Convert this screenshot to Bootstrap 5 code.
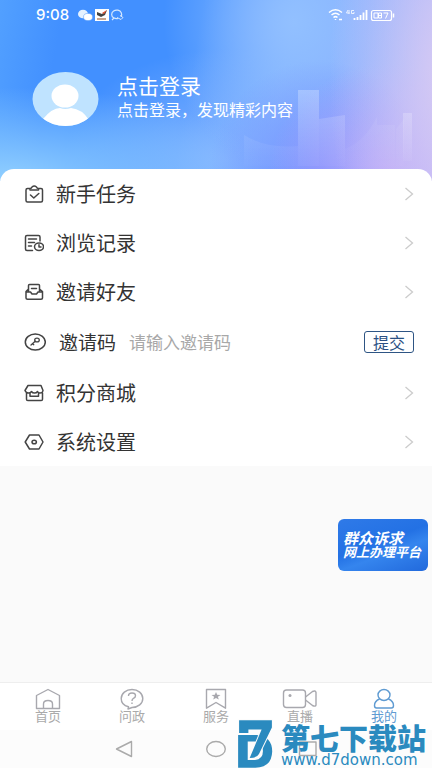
<!DOCTYPE html>
<html lang="zh-CN">
<head>
<meta charset="utf-8">
<meta name="viewport" content="width=device-width, initial-scale=1">
<title>我的</title>
<link href="https://cdn.jsdelivr.net/npm/bootstrap@5.3.0/dist/css/bootstrap.min.css" rel="stylesheet">
<style>
body { font-family: "Noto Sans CJK SC", sans-serif; background: #fafafa; color: #333; }
svg { display: block; flex: none; }
.hero {
  height: 181px; margin-bottom: -12px; color: #fff;
  background:
    radial-gradient(ellipse 120px 260px at 104% 42%, #d8caf3 0, #d3c8f600 100%),
    radial-gradient(ellipse 120px 110px at 90% 96%, #b9a6f9 0, #b9a6f900 100%),
    radial-gradient(ellipse 110px 110px at 74% 94%, #7590ff 0, #7591ff00 100%),
    radial-gradient(ellipse 130px 150px at 68% 12%, #92c0ff 0, #8dbcff00 100%),
    radial-gradient(ellipse 260px 90px at 2% 98%, #8fceff 0, #92d0ff00 100%),
    radial-gradient(ellipse 160px 110px at 52% 88%, #84b4ff 0, #86b4ff00 100%),
    linear-gradient(100deg, #52a0ff 0, #4290ff 14%, #4290ff 44%, #7caeff 64%, #8aacff 80%, #b0bcfc 100%);
}
.skyline { right: 0; bottom: 0; }
.status { padding: 5px 36px 0 36px; height: 24px; }
.clock { font: 500 15px/20px Inter, sans-serif; margin-right: 9px; }
.profile { padding: 48px 32px 0; gap: 18px; }
.login-text { padding-bottom: 4px; }
.login-name { font-size: 21px; line-height: 24px; }
.login-tip { font-size: 16px; line-height: 24px; }
.menu-card { border-radius: 14px 14px 0 0; background: #fff; }
.menu-row { height: 49px; padding: 0 18px 0 24px; gap: 12px; font-size: 20px; line-height: 24px; color: #333; }
.menu-row.code-row { height: 52px; gap: 13px; }
.code-row label { font-size: 19px; }
.code-row input { font-size: 17px; line-height: 24px; min-width: 0; color: #333; background: none; }
.code-row input::placeholder { color: #a8a8a8; opacity: 1; }
.btn-submit { font-size: 16px; line-height: 20px; padding: 0 8px; border: 1px solid #2e5584; border-radius: 3px; color: #2a5083; background: #fff; }
.ink { fill: none; stroke: #444; stroke-width: 1.5; stroke-linejoin: round; stroke-linecap: round; }
.chev { fill: none; stroke: #ccc; stroke-width: 1.3; }
.float-ad {
  right: 4px; top: 53px; width: 90px; height: 52px; border-radius: 6px; padding: 0 0 2px 5px;
  background: linear-gradient(160deg, #2f7ae8 0, #2371e4 45%, #3585ee 62%, #2169dc 100%);
  font-weight: 700; font-style: italic; color: #fff;
}
.ad-a { font-size: 15px; line-height: 14px; }
.ad-b { font-size: 13px; line-height: 13px; }
.tabs { height: 48px; padding: 5px 6px 0; background: #fff; border-top: 1px solid #eee; }
.tab { font-size: 13px; line-height: 12px; color: #aaa; }
.tab svg { fill: none; stroke: #a8a8ae; stroke-width: 1.4; stroke-linejoin: round; }
.tab.current { color: #5f9bd2; }
.tab.current svg { stroke: #5f9bd2; }
.sysbar { height: 38px; gap: 72px; background: #fcfcfc; }
.sysbar svg { fill: none; stroke: #aaa; stroke-width: 1.4; stroke-linejoin: round; }
.stamp { right: 6px; bottom: 0; gap: 8px; color: #2a8abf; pointer-events: none; }
.stamp-name { font-size: 29px; line-height: 29px; font-weight: 900; }
.stamp-url { font: 15px/16px "DejaVu Sans", sans-serif; }
</style>
<script src="https://cdn.jsdelivr.net/npm/bootstrap@5.3.0/dist/js/bootstrap.bundle.min.js"></script>
</head>
<body>
<div class="d-flex flex-column min-vh-100 position-relative overflow-hidden">
  <header class="hero position-relative">
    <svg class="skyline position-absolute" width="200" height="100" viewBox="0 0 200 100">
      <defs><linearGradient id="tower" x1="0" y1="0" x2="0" y2="1"><stop offset="0" stop-color="#fff" stop-opacity=".26"/><stop offset="1" stop-color="#fff" stop-opacity=".05"/></linearGradient></defs>
      <g fill="url(#tower)"><path d="M66 9h21v76H66z"/><path opacity=".6" d="M87 38l26-4v51H87z"/><path opacity=".3" d="M12 54q22 14 54 11v20H12z"/><path opacity=".25" d="M113 68q20-8 32-32v49h-32zM145 44h18v41h-18zM164 48l8-10v47h-8z"/><path opacity=".8" d="M171 32h9v48h-9z"/></g>
    </svg>
    <div class="status d-flex align-items-center position-relative">
      <span class="clock">9:08</span>
      <svg width="54" height="14" viewBox="-3 0 54 14" class="me-auto ms-n1">
        <ellipse cx="2" cy="6" rx="5" ry="4.3" fill="#e5f2ff"/><ellipse cx="7" cy="9" rx="4.5" ry="3.6" fill="#fff" stroke="#69a7fb" stroke-width=".6"/>
        <path fill="#fff" d="M14 1h14v12H14z"/><path d="M16 4l5 2 5-4-2 5-4 2-4-2z" fill="#444"/><path d="M21 5l5-3-3 4z" fill="#e65332"/><path d="M16 11h9" stroke="#b78768" stroke-width="1.500"/>
        <path d="M37 10.500a5 4.300 0 1 1 3-2M33 10l-2 2" fill="none" stroke="#d5e8ff" stroke-width="1.200"/><path d="M36 9.500l4 2 2-2-3-2" fill="none" stroke="#d5e8ff"/>
      </svg>
      <svg width="68" height="14" viewBox="0 0 68 14" fill="none" stroke="#fff" stroke-width="1.500">
        <path d="M1 4.500Q7.500-.8 14 4.500M3.500 7q4-3.500 8 0M5.500 9.500q2-1.800 4 0M7.500 11v1M11 11.500h3"/>
        <path d="M20 2l-1.500 3h3M21 2v4M26 2.500h-2.500v3H26V4" stroke-width=".8"/>
        <path d="M26.500 10v2M29.500 9v3M32.500 7v5M35.500 4.500V12M38.500 2v10" stroke-width="1.800"/>
        <rect x="43.500" y="2.500" width="20" height="10" rx="2" stroke-width="1.200"/><path d="M65.500 5.500v4"/><path d="M46 5h4v5h-4zM50.500 5h3v5h-3zM50.500 7.500h3M55.500 5h4.500l-2.500 5.500" stroke-width="1"/>
      </svg>
    </div>
    <a href="#" class="profile d-flex align-items-center text-white text-decoration-none position-relative">
      <svg width="67" height="54" viewBox="0 0 67 54"><defs><clipPath id="face"><ellipse cx="33.500" cy="27" rx="33" ry="27"/></clipPath></defs><g clip-path="url(#face)"><path fill="#bfe3ff" d="M0 0h67v54H0z"/><ellipse cx="33" cy="24" rx="13.500" ry="11.500" fill="#fff"/><path d="M11 54V47Q20 36 28 36Q33 38 39 36Q50 37 57 48V54Z" fill="#fff"/></g></svg>
      <span class="login-text"><span class="login-name d-block">点击登录</span><span class="login-tip d-block">点击登录，发现精彩内容</span></span>
    </a>
  </header>

  <main class="flex-grow-1 position-relative">
    <div class="menu-card">
      <a href="#" class="menu-row d-flex align-items-center text-decoration-none">
        <svg class="ink" width="20" height="18" viewBox="0 0 20 18"><path d="M6 3.500H3.500Q2 3.500 2 5V15.500Q2 17 3.500 17H17Q18.500 17 18.500 15.500V5Q18.500 3.500 17 3.500H14.500M6 5V3.500Q7.500 3.500 8 2Q10.200 0 12.500 2Q13 3.500 14.500 3.500V5ZM6.500 10l3.300 3 5-4.500"/></svg>
        <span class="me-auto">新手任务</span><svg class="chev" width="10" height="14" viewBox="0 0 10 14"><path d="M1.500 1l7 6-7 6"/></svg>
      </a>
      <a href="#" class="menu-row d-flex align-items-center text-decoration-none">
        <svg class="ink" width="20" height="18" viewBox="0 0 20 18"><path d="M8.500 16.500H3Q1.500 16.500 1.500 15V3Q1.500 1.500 3 1.500H14.500Q16 1.500 16 3V7M4.500 5h8M4.500 8.500h6M4.500 12h3"/><ellipse cx="15" cy="12.800" rx="4.500" ry="3.800"/><path d="M15 10.800v2.200h2"/></svg>
        <span class="me-auto">浏览记录</span><svg class="chev" width="10" height="14" viewBox="0 0 10 14"><path d="M1.500 1l7 6-7 6"/></svg>
      </a>
      <a href="#" class="menu-row d-flex align-items-center text-decoration-none">
        <svg class="ink" width="20" height="18" viewBox="0 0 20 18"><path d="M4.500 8V2.500Q4.500 1.500 5.500 1.500H14.500Q15.500 1.500 15.500 2.500V8M7.500 5.500h5M4.500 6L2 8.500V15Q2 16.200 3.500 16.200H17Q18.500 16.200 18.500 15V8.500L15.500 6M2 9h4.500l1.500 2h4.500L14 9h4.500"/></svg>
        <span class="me-auto">邀请好友</span><svg class="chev" width="10" height="14" viewBox="0 0 10 14"><path d="M1.500 1l7 6-7 6"/></svg>
      </a>
      <form class="menu-row code-row d-flex align-items-center">
        <svg class="ink" width="22" height="18" viewBox="0 0 22 18"><ellipse cx="11.300" cy="9" rx="10" ry="8"/><ellipse cx="13" cy="7" rx="2.300" ry="1.900" stroke-width="1.300"/><path d="M11.200 8.300L7 12M8.500 10.700l1.300 1" stroke-width="1.300"/></svg>
        <label for="code">邀请码</label>
        <input id="code" type="text" class="flex-grow-1 border-0 p-0" placeholder="请输入邀请码">
        <button type="button" class="btn-submit">提交</button>
      </form>
      <a href="#" class="menu-row d-flex align-items-center text-decoration-none">
        <svg class="ink" width="20" height="18" viewBox="0 0 20 18"><path d="M4 1.500h13l2 5q-.4 2.500-3 2.500-2 0-2.500-1.500-1 1.500-3 1.500T7.500 7.500Q6.500 9 4.500 9 2 9 1 6.500ZM2.500 9v6.200q0 1.300 1.300 1.300h13.400q1.300 0 1.300-1.300V9M6 9.500v2.700h8.500V9.500"/></svg>
        <span class="me-auto">积分商城</span><svg class="chev" width="10" height="14" viewBox="0 0 10 14"><path d="M1.500 1l7 6-7 6"/></svg>
      </a>
      <a href="#" class="menu-row d-flex align-items-center text-decoration-none">
        <svg class="ink" width="20" height="18" viewBox="0 0 20 18"><path d="M5.500 2h9.500l4 7-4 7H5.500L1.200 9Z"/><ellipse cx="10.200" cy="9" rx="2.200" ry="1.800"/></svg>
        <span class="me-auto">系统设置</span><svg class="chev" width="10" height="14" viewBox="0 0 10 14"><path d="M1.500 1l7 6-7 6"/></svg>
      </a>
    </div>
    <div class="position-relative">
      <a href="#" class="float-ad position-absolute d-flex flex-column justify-content-center text-nowrap text-decoration-none"><span class="ad-a">群众诉求</span><span class="ad-b">网上办理平台</span></a>
    </div>
  </main>

  <nav class="tabs d-flex">
    <a href="#" class="tab d-flex flex-column align-items-center text-decoration-none w-100"><svg width="26" height="22" viewBox="0 0 26 22"><path d="M1.500 20.500V7.500L13 1.500l11.500 6v13ZM8.500 20.500V16q0-3.500 4.500-3.500t4.500 3.500v4.500"/></svg>首页</a>
    <a href="#" class="tab d-flex flex-column align-items-center text-decoration-none w-100"><svg width="26" height="22" viewBox="0 0 26 22"><path d="M9.500 18.800C5 17.800 2.200 14.500 2.200 10.500 2.200 5.500 7 1.500 13 1.500s10.800 4 10.800 9S19 19.500 13 19.500L9 21ZM9.500 8q0-3 3.500-3t3.500 2.700q0 1.700-2 2.600Q13 11 13 13M13 14.500v1.500"/></svg>问政</a>
    <a href="#" class="tab d-flex flex-column align-items-center text-decoration-none w-100"><svg width="26" height="22" viewBox="0 0 26 22"><path d="M3.500 1.500h19v18.700L13 14.500l-9.500 5.700Z"/><path d="M13 4l1.200 2.800 3.300.2-2.600 1.800.9 2.800-2.800-1.600-2.800 1.600.9-2.800L8.500 7l3.300-.2Z" fill="#a8a8ae" stroke="none"/></svg>服务</a>
    <a href="#" class="tab d-flex flex-column align-items-center text-decoration-none w-100"><svg width="36" height="22" viewBox="0 0 36 22"><rect x="1.500" y="2" width="22" height="17.500" rx="3"/><path d="M23.500 9l7-5.500q3-1.500 3.500 1v12.500q-.5 2-3.500.5l-7-5.500"/><circle cx="8" cy="7.500" r="1.500" fill="#a8a8ae" stroke="none"/></svg>直播</a>
    <a href="#" class="tab current d-flex flex-column align-items-center text-decoration-none w-100" aria-current="page"><svg width="26" height="22" viewBox="0 0 26 22"><ellipse cx="13" cy="7" rx="6" ry="5.500"/><path d="M8.500 11Q3.500 13 3.500 17.500q0 2.500 2 2.500h15q2 0 2-2.500 0-4.500-5-6.500"/></svg>我的</a>
  </nav>
  <div class="sysbar d-flex justify-content-center align-items-center">
    <button type="button" class="border-0 bg-transparent p-0" aria-label="返回"><svg width="20" height="18" viewBox="0 0 20 18"><path d="M2.500 9L17.500 1.500v15Z"/></svg></button>
    <button type="button" class="border-0 bg-transparent p-0" aria-label="主屏"><svg width="20" height="18" viewBox="0 0 20 18"><ellipse cx="10" cy="9" rx="9.300" ry="7.500"/></svg></button>
    <button type="button" class="border-0 bg-transparent p-0" aria-label="最近"><svg width="20" height="18" viewBox="0 0 20 18"><path d="M1.500 2h16.500v13.500H1.500z"/></svg></button>
  </div>

  <div class="stamp position-absolute d-flex align-items-end">
    <svg width="36" height="49" viewBox="0 0 108 148" fill="currentColor"><path fill-rule="evenodd" d="M3 48H58Q106 52 106 98Q104 147 55 147H3ZM32 68V124H54Q78 122 78 97Q78 70 54 68Z"/><path d="M6 4H105V26L66 106Q60 118 38 118L74 32H34V42H6Z" stroke="#fcfcfc" stroke-width="6" paint-order="stroke"/></svg>
    <div class="d-flex flex-column"><span class="stamp-name">第七下载站</span><span class="stamp-url">www.d7down.com</span></div>
  </div>
</div>
</body>
</html>
